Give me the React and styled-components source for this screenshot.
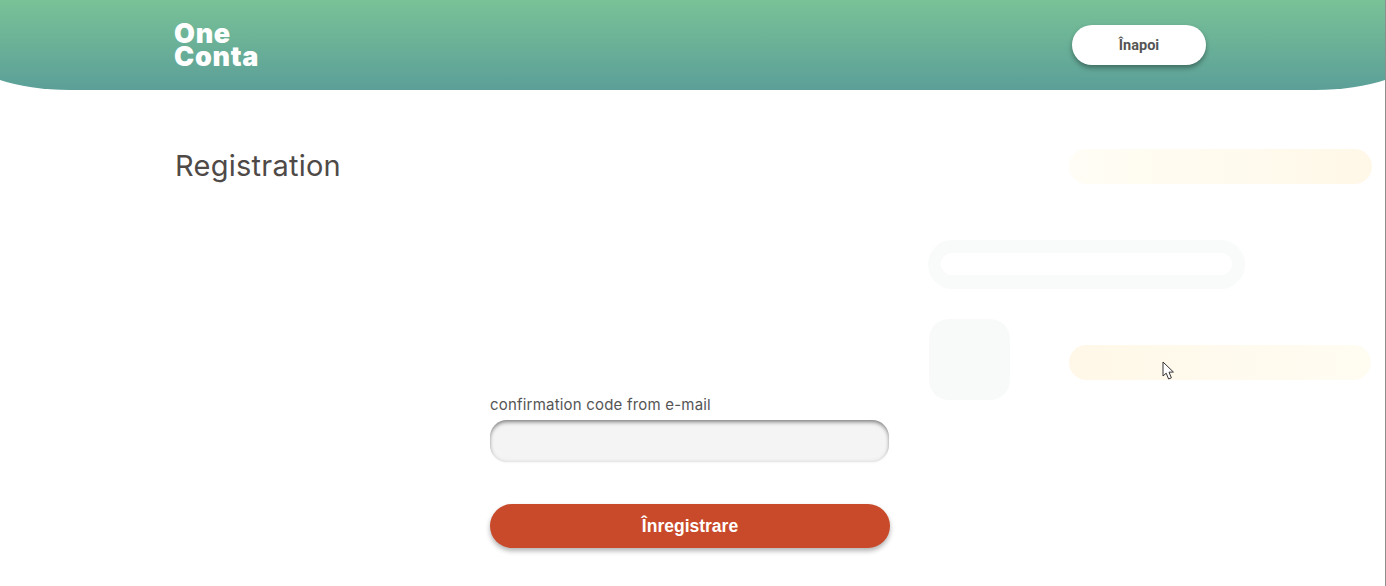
import styled, { createGlobalStyle } from "styled-components";

const GlobalStyle = createGlobalStyle`
  html, body {
    margin: 0;
    padding: 0;
    height: 100%;
    overflow: hidden;
    background: #fff;
  }
  body {
    font-family: "Inter", "Liberation Sans", sans-serif;
  }
`;

const App = () => {
  return (
    <Page>
      <GlobalStyle />
      <Header>
        <Logo>One<br />Conta</Logo>
        <BackButton>Înapoi</BackButton>
      </Header>
      <Main>
        <Title>Registration</Title>
        <Form>
          <Label>confirmation code from e-mail</Label>
          <CodeInput />
          <SubmitButton>Înregistrare</SubmitButton>
        </Form>
        <GhostColumn>
          <GhostBar />
          <GhostField><GhostFieldInner /></GhostField>
          <GhostRow>
            <GhostSquare />
            <GhostBar $strong>
              <Cursor width="13" height="20" viewBox="0 0 13 20">
                <path d="M1 1 L1 15 L4.2 12.2 L6.6 18 L9.4 16.8 L7 11.2 L11.4 11 Z" fill="#fff" stroke="#333" strokeWidth="1" strokeLinejoin="round" />
              </Cursor>
            </GhostBar>
          </GhostRow>
        </GhostColumn>
      </Main>
    </Page>
  );
};

export default App;

const Page = styled.div`
  width: 1385px;
  height: 586px;
  border-right: 1px solid #8f8f8f;
  overflow: hidden;
`;

// wider than the page so the corner curve is cut off at the window edge
const Header = styled.header`
  height: 90px;
  box-sizing: border-box;
  margin: 0 -30px;
  padding: 0 209px 0 204px;
  display: flex;
  align-items: center;
  justify-content: space-between;
  background: linear-gradient(180deg, #79c297 0%, #5b9f98 100%);
  border-radius: 0 0 100px 100px / 0 0 35px 35px;
`;

const Logo = styled.div`
  font-family: "Inter", sans-serif;
  font-weight: 900;
  font-size: 27px;
  line-height: 23px;
  color: #fff;
  letter-spacing: 0.7px;
`;

const BackButton = styled.button`
  width: 134px;
  height: 40px;
  border: 0;
  border-radius: 20px;
  background: #fff;
  color: #555;
  font-family: "Roboto", sans-serif;
  font-weight: 700;
  font-size: 14.5px;
  box-shadow: 0 3px 5px rgba(0, 0, 0, 0.35);
`;

const Main = styled.main`
  display: grid;
  grid-template-columns: 315px 400px 482px;
  padding-left: 175px;
  height: 496px;
`;

const Title = styled.h1`
  margin: 56px 0 0;
  font-family: "Inter", sans-serif;
  font-weight: 400;
  font-size: 29px;
  line-height: 40px;
  letter-spacing: 0.25px;
  color: #4f4a47;
  white-space: nowrap;
`;

const Form = styled.div`
  display: flex;
  flex-direction: column;
  padding-top: 306px;
`;

const Label = styled.label`
  font-family: "Inter", sans-serif;
  font-size: 15px;
  line-height: 18px;
  letter-spacing: 0.2px;
  color: #555;
`;

const CodeInput = styled.input`
  box-sizing: border-box;
  width: 399px;
  height: 42px;
  margin-top: 6px;
  border: 0;
  border-radius: 17px;
  background: #f4f4f4;
  outline: none;
  box-shadow: inset 0 3px 4px -1px rgba(0, 0, 0, 0.45), inset 0 0 4px rgba(0, 0, 0, 0.12), 0 1px 2px rgba(0, 0, 0, 0.04);
`;

const SubmitButton = styled.button`
  width: 400px;
  height: 44px;
  margin-top: 42px;
  border: 0;
  border-radius: 22px;
  background: #c84a2a;
  color: #fff;
  font-family: "Liberation Sans", sans-serif;
  font-weight: 700;
  font-size: 17.5px;
  box-shadow: 0 3px 5px rgba(0, 0, 0, 0.3);
`;

const GhostColumn = styled.div`
  display: flex;
  flex-direction: column;
  padding: 59px 0 0 38px;
  box-sizing: border-box;
`;

const GhostBar = styled.div`
  position: relative;
  box-sizing: border-box;
  flex: none;
  width: ${(p) => (p.$strong ? "302px" : "303px")};
  height: 35px;
  margin: ${(p) => (p.$strong ? "6px 1px 0 auto" : "0 0 0 auto")};
  border-radius: 18px;
  background: ${(p) => (p.$strong ? "linear-gradient(90deg, #fff8e8, #fffcf2)" : "linear-gradient(90deg, #fffdf5, #fff8e8)")};
`;

const GhostField = styled.div`
  width: 317px;
  height: 49px;
  box-sizing: border-box;
  padding: 13px;
  margin-top: 56px;
  border-radius: 25px;
  background: #f9fafa;
`;

const GhostFieldInner = styled.div`
  height: 22px;
  border-radius: 11px;
  background: #fff;
`;

const GhostRow = styled.div`
  display: flex;
  align-items: center;
  margin-top: 30px;
  padding-left: 1px;
`;

const GhostSquare = styled.div`
  width: 81px;
  height: 81px;
  border-radius: 20px;
  background: #f8faf9;
`;

const Cursor = styled.svg`
  position: absolute;
  left: 93px;
  top: 16px;
`;
